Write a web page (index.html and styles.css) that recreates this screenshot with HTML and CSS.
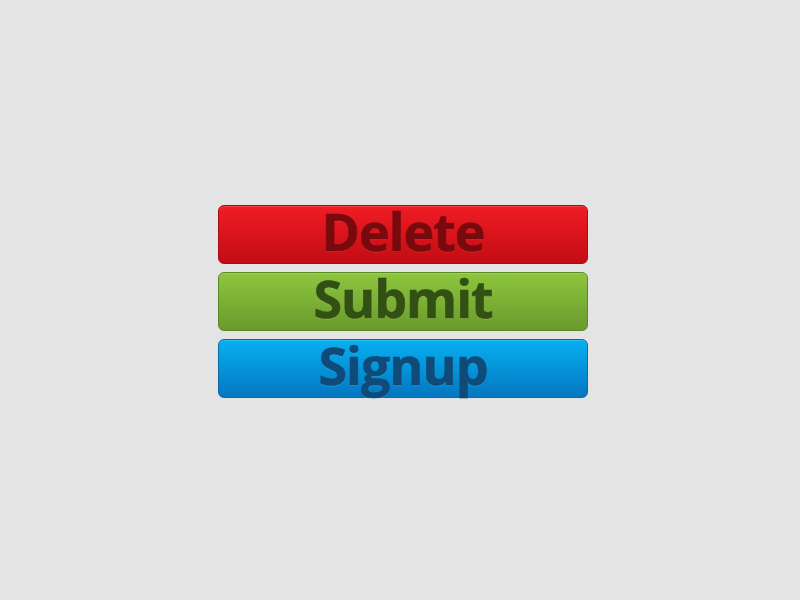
FILE: index.html
```html
<!DOCTYPE html>
<html>
<head>
<meta charset="utf-8">
<link rel="stylesheet" href="styles.css">
</head>
<body>
<div class="stack">
  <button class="btn btn-red">Delete</button>
  <button class="btn btn-green">Submit</button>
  <button class="btn btn-blue">Signup</button>
</div>
</body>
</html>
```
FILE: styles.css
```css
html, body {
  margin: 0;
  padding: 0;
  background: #e4e4e4;
  width: 800px;
  height: 600px;
  overflow: hidden;
}
.stack {
  display: flex;
  flex-direction: column;
  gap: 8px;
  width: 370px;
  padding: 205px 0 0 218px;
}
.btn {
  box-sizing: border-box;
  display: block;
  height: 59px;
  width: 370px;
  border-radius: 6px;
  border: 1px solid;
  margin: 0;
  padding: 0 0 8px 0;
  font-family: "Open Sans", sans-serif;
  font-weight: 700;
  font-size: 52px;
  line-height: 49px;
  letter-spacing: -1px;
  text-align: center;
  cursor: pointer;
  -webkit-text-stroke: 0.6px currentColor;
}
.btn-red {
  background: linear-gradient(#f01c24, #c30c14);
  border-color: #a30d13;
  color: #780a0d;
  box-shadow: inset 0 1px 0 rgba(255,255,255,0.15);
  text-shadow: 0 1px 0 rgba(255,80,80,0.35);
}
.btn-green {
  background: linear-gradient(#8dc63f, #6a9a2c);
  border-color: #5a8a24;
  color: #335014;
  box-shadow: inset 0 1px 0 rgba(255,255,255,0.15);
  text-shadow: 0 1px 0 rgba(180,230,120,0.3);
}
.btn-blue {
  background: linear-gradient(#06b0f0, #0477c0);
  border-color: #0a6aa8;
  color: #0f4a78;
  box-shadow: inset 0 1px 0 rgba(255,255,255,0.15);
  text-shadow: 0 1px 0 rgba(120,210,255,0.3);
}
```
